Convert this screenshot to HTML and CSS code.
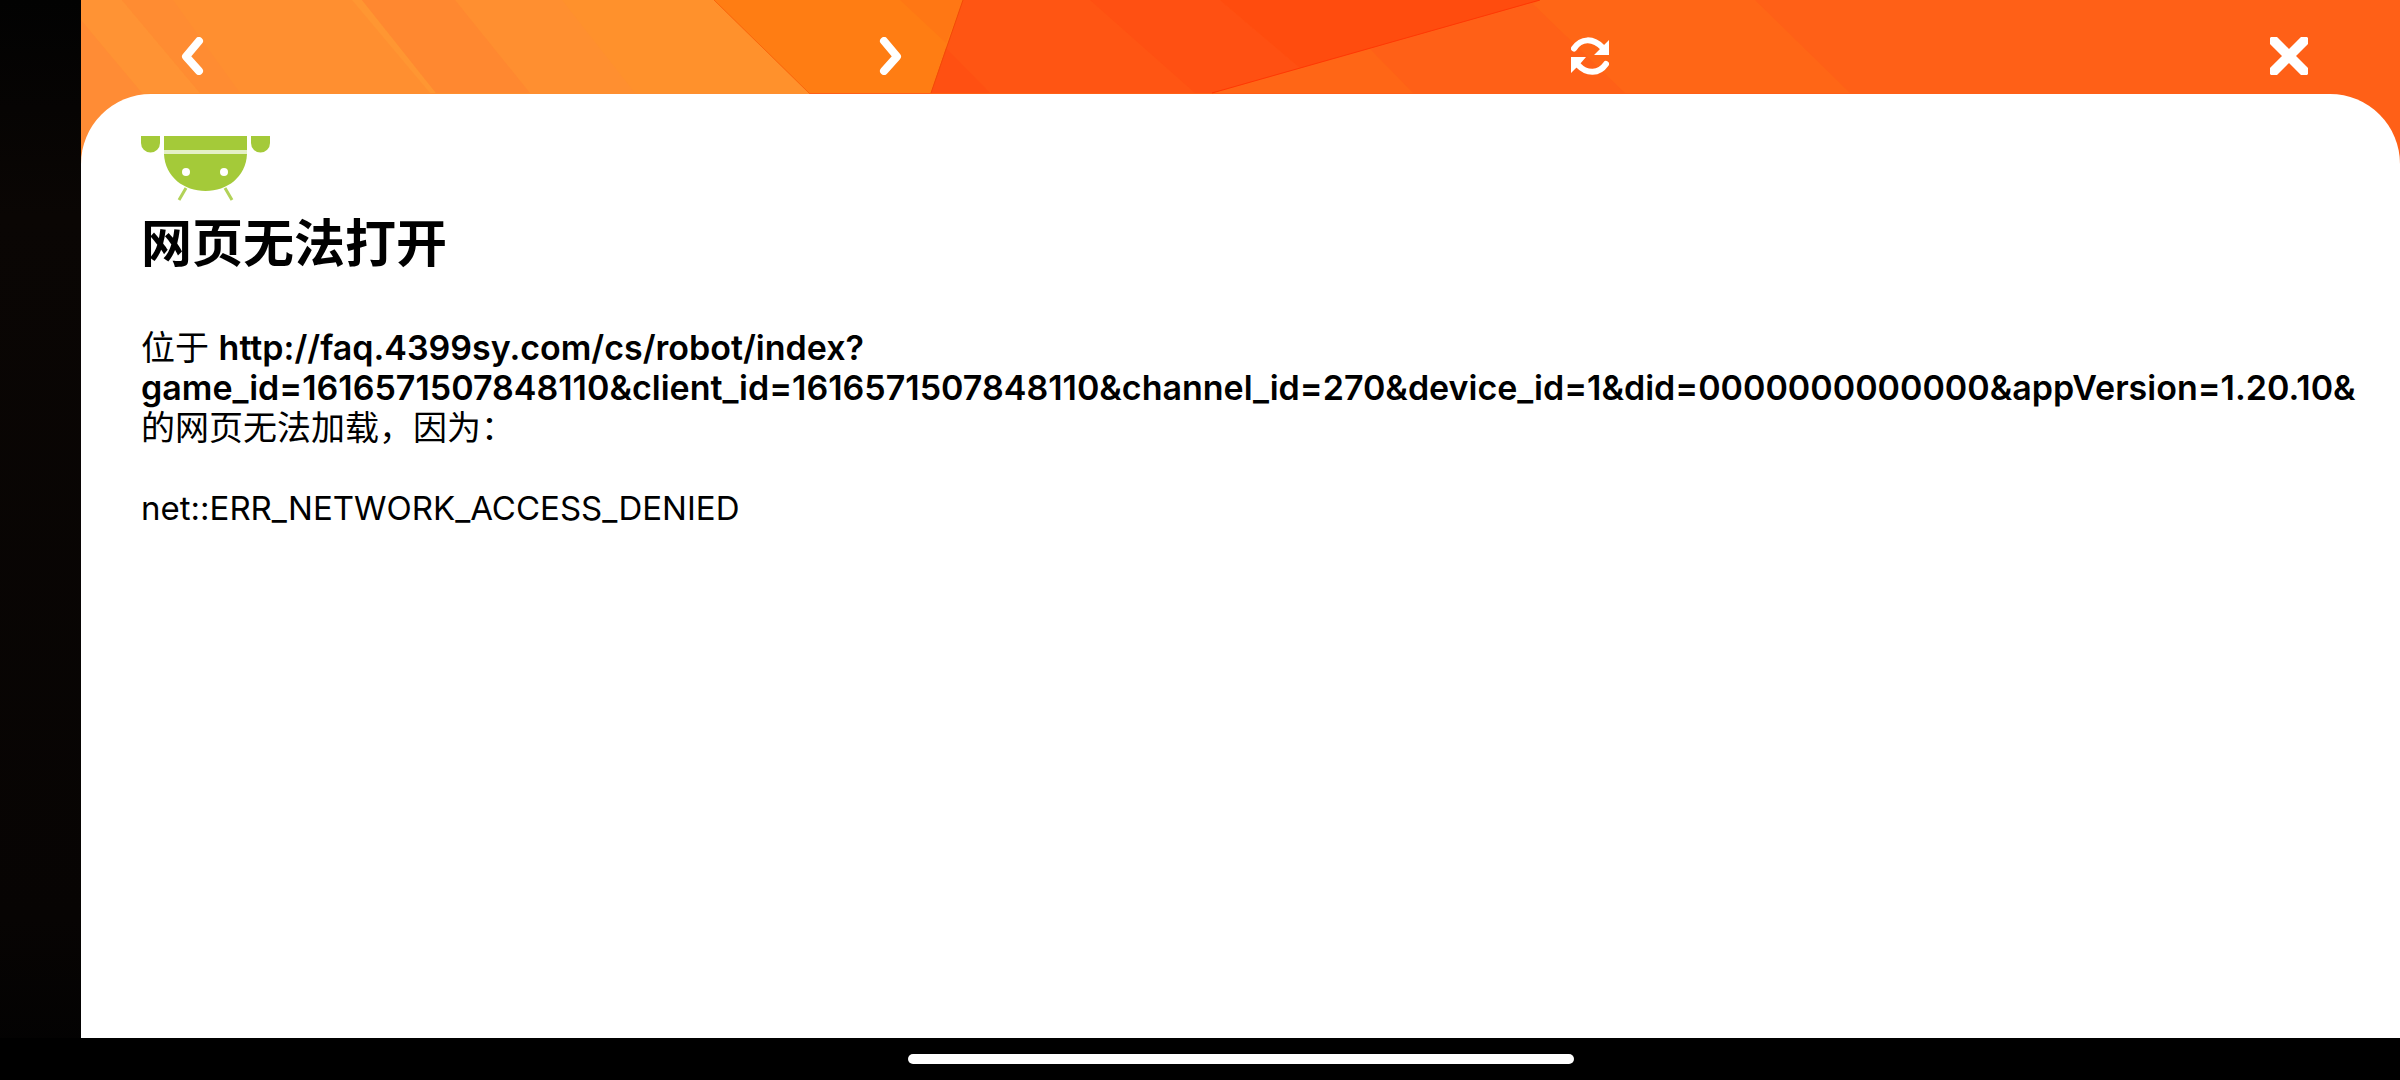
FILE: index.html
```html
<!DOCTYPE html>
<html lang="zh-CN">
<head>
<meta charset="utf-8">
<meta name="viewport" content="width=device-width, initial-scale=1">
<title>网页无法打开</title>
<link rel="stylesheet" href="styles.css">
</head>
<body>
<div class="screen">
  <div class="window">
    <svg class="backdrop" viewBox="81 0 2319 170" preserveAspectRatio="none" aria-hidden="true">
      <rect x="81" width="2319" height="170" fill="#ff6017"/>
      <path fill="#ff8f30" d="M81 0H714L809 93V170H81z"/>
      <path fill="#ff8c35" d="M81 20L142 93V170H81z"/>
      <path fill="#ff9334" d="M81 0H122L200 93H142L81 20z"/>
      <path fill="#ff8c32" d="M122 0H173L240 93H200z"/>
      <path fill="#ff9632" d="M352 0H362L436 93H430z"/>
      <path fill="#ff8830" d="M362 0H455L530 93H436z"/>
      <path fill="#ff912c" d="M562 0H714L809 93H635z"/>
      <path fill="#ff7d13" d="M714 0H963L931 93H809z"/>
      <path fill="#ff7714" d="M900 0H963L946 43z"/>
      <path fill="#ff5513" d="M963 0H1540L1212 93H931z"/>
      <path fill="#ff5012" d="M1090 0H1220L1300 68L1212 93H1195z"/>
      <path fill="#ff4c0e" d="M1220 0H1540L1300 68z"/>
      <path fill="#ff5012" d="M946 48L990 93H931z"/>
      <path fill="#ff6616" d="M1212 93L1370 49L1413 93z"/>
      <path fill="#ff6616" d="M1540 0H1755L1850 93H1625L1533 4z"/>
      <g fill="none" stroke-width="1">
        <path stroke="#f9660d" d="M714 0L809 93"/>
        <path stroke="#f34a08" d="M963 0L931 93"/>
        <path stroke="#ff3804" d="M1540 0L1212 93"/>
      </g>
    </svg>

    <nav class="toolbar" aria-label="浏览器">
      <button class="tool" type="button" aria-label="后退">
        <svg viewBox="0 0 38 38"><path d="M26 4L13 19.500L26 34" fill="none" stroke="#fff" stroke-width="8" stroke-linecap="round" stroke-linejoin="round"/></svg>
      </button>
      <button class="tool" type="button" aria-label="前进">
        <svg viewBox="0 0 38 38"><path d="M12 4L25 19.500L12 34" fill="none" stroke="#fff" stroke-width="8" stroke-linecap="round" stroke-linejoin="round"/></svg>
      </button>
      <button class="tool" type="button" aria-label="刷新">
        <svg viewBox="0 0 38 38">
          <g fill="none" stroke="#fff" stroke-width="6" stroke-linecap="round"><path d="M3 11.500C10 1 22 .5 32 11"/><path d="M35 27C28 37 16 37.500 7 28"/></g>
          <path fill="#fff" d="M38 3V18H23L29 12zM0 36V20H15L9 27z"/>
        </svg>
      </button>
      <button class="tool" type="button" aria-label="关闭">
        <svg viewBox="0 0 38 38"><path d="M4 4L34 34M34 4L4 34" stroke="#fff" stroke-width="10" stroke-linecap="round"/></svg>
      </button>
    </nav>

    <main class="sheet">
      <svg class="robot" viewBox="0 0 129 66" role="img" aria-label="Android">
        <g fill="#a4ca39">
          <path d="M0 0H19V7A9.500 9.500 0 0 1 0 7z"/>
          <path d="M110 0H129V7A9.500 9.500 0 0 1 110 7z"/>
          <path d="M23 0H106V14H23z"/>
          <path d="M23 18H106C105 41 86 55 64.500 55S24 41 23 18z"/>
        </g>
        <path d="M23 14H106V18H23z" fill="#e4f0c6"/>
        <path d="M45 52L38 64M84 52L91 64" stroke="#b2d258" stroke-width="3"/>
        <circle cx="45" cy="36" r="4" fill="#fff"/>
        <circle cx="83" cy="36" r="4" fill="#fff"/>
      </svg>
      <h1 class="title">网页无法打开</h1>
      <p class="message">位于 <strong class="address">http://faq.4399sy.com/cs/robot/index?<br>game_id=1616571507848110&amp;client_id=1616571507848110&amp;channel_id=270&amp;device_id=1&amp;did=0000000000000&amp;appVersion=1.20.10&amp;</strong><br>的网页无法加载，因为：</p>
      <p class="message error-code">net::ERR_NETWORK_ACCESS_DENIED</p>
    </main>
  </div>
  <footer class="system-bar"><div class="home-pill"></div></footer>
</div>
</body>
</html>
```
FILE: styles.css
```css
* {
  box-sizing: border-box;
}

body {
  margin: 0;
  background: #000;
  color: #000;
  font-family: Inter, "Noto Sans CJK SC", sans-serif;
  font-size: 34px;
  line-height: 40px;
}

.screen {
  display: flex;
  flex-direction: column;
  min-height: 100vh;
  padding-left: 81px;
  background: linear-gradient(#020202, #0a0604 20%, #070403 85%, #020202);
}

.window {
  position: relative;
  flex: 1;
  display: flex;
  flex-direction: column;
}

.backdrop {
  position: absolute;
  top: 0;
  left: 0;
  width: 100%;
  height: 170px;
}

.toolbar {
  position: relative;
  display: flex;
  justify-content: space-between;
  padding: 37px 92px 19px;
}

.tool {
  width: 38px;
  height: 38px;
  padding: 0;
  border: 0;
  background: none;
  cursor: pointer;
}

.tool svg {
  display: block;
  width: 100%;
  height: 100%;
}

.sheet {
  position: relative;
  flex: 1;
  padding: 42px 39px 40px 60px;
  border-radius: 70px 70px 0 0;
  background: #fff;
}

.robot {
  display: block;
  width: 129px;
  height: 66px;
}

.title {
  margin: 12px 0 54px;
  font-size: 51px;
  font-weight: 700;
  line-height: 60px;
}

.message {
  margin: 0 0 40px;
  overflow: hidden;
  white-space: nowrap;
}

.address {
  font-weight: 600;
}

.error-code {
  font-size: 33px;
}

.system-bar {
  margin-left: -81px;
  padding: 16px 0 16px 81px;
  background: #000;
}

.home-pill {
  width: 666px;
  max-width: 80%;
  height: 10px;
  margin: 0 auto;
  border-radius: 5px;
  background: #fff;
}
```
